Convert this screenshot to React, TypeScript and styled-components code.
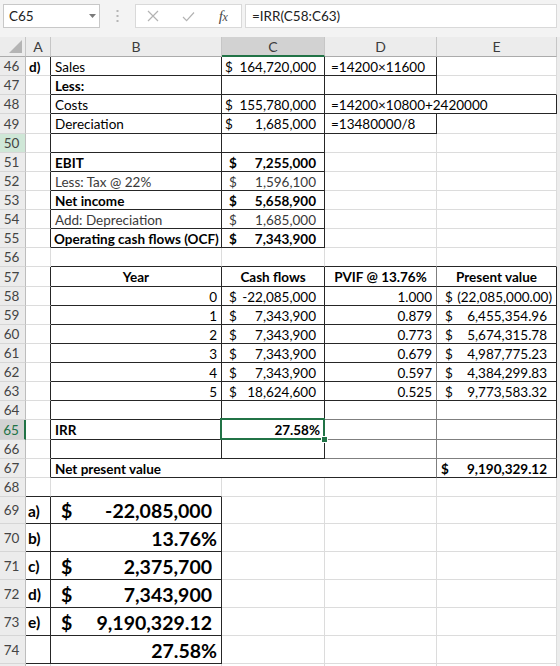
import React from 'react';
import styled, { createGlobalStyle, css } from 'styled-components';

const FONT = `Lato, "Open Sans", "Liberation Sans", sans-serif`;
const K = '#262626';
const M = '#7f7f7f';
const G = '#dcdcdc';
const GREEN = '#217346';
const COLS = '26px 25px 171px 103px 112px 120px 1fr';

const GlobalStyle = createGlobalStyle`
  html, body { margin: 0; padding: 0; background: #ffffff; }
  body { font-family: ${FONT}; }
  #root { width: 560px; height: 666px; }
`;

const Sheet = styled.div`
  width: 560px;
  height: 666px;
  overflow: hidden;
  background: #fff;
  display: flex;
  flex-direction: column;
  font-family: ${FONT};
`;

/* ---------- formula bar ---------- */
const FormulaBar = styled.div`
  flex: none;
  height: 37px;
  box-sizing: border-box;
  background: #f3f3f3;
  display: flex;
  align-items: flex-start;
  padding: 4px 3px 0 3px;
`;

const NameBox = styled.div`
  width: 97px;
  height: 24px;
  box-sizing: border-box;
  background: #fff;
  border: 1px solid #c8c8c8;
  display: flex;
  align-items: center;
  justify-content: space-between;
  padding: 0 3px 0 5px;
  font-size: 13.5px;
  color: #222;
`;

const Grip = styled.div`
  width: 35px;
  height: 24px;
  display: flex;
  align-items: center;
  justify-content: center;
`;

const ButtonBox = styled.div`
  width: 107px;
  height: 24px;
  box-sizing: border-box;
  background: #fff;
  border: 1px solid #d9d9d9;
  display: flex;
  align-items: center;
`;

const BarButton = styled.div<{ $w: number }>`
  width: ${(p) => p.$w}px;
  height: 22px;
  display: flex;
  align-items: center;
  justify-content: center;
`;

const Fx = styled.span`
  font-family: "Liberation Serif", "DejaVu Serif", serif;
  font-style: italic;
  font-size: 15px;
  color: #4a4a4a;
  letter-spacing: -0.5px;
  & small { font-size: 12px; }
`;

const FormulaInput = styled.div`
  margin-left: 3px;
  width: 312px;
  height: 24px;
  box-sizing: border-box;
  background: #fff;
  border: 1px solid #d9d9d9;
  display: flex;
  align-items: center;
  padding-left: 6px;
  font-size: 13.5px;
  color: #222;
`;

/* ---------- grid ---------- */
const Row = styled.div<{ $h: number }>`
  flex: none;
  display: grid;
  grid-template-columns: ${COLS};
  height: ${(p) => p.$h}px;
`;

const Corner = styled.div`
  box-sizing: border-box;
  background: #ececec;
  border-right: 1px solid #c6c6c6;
  border-bottom: 1px solid #ababab;
  display: flex;
  align-items: flex-end;
  justify-content: flex-end;
  padding: 0 3px 3px 0;
`;

const ColHead = styled.div<{ $active?: boolean }>`
  box-sizing: border-box;
  background: ${(p) => (p.$active ? '#d2d2d2' : '#ececec')};
  border-right: 1px solid #c6c6c6;
  border-bottom: ${(p) => (p.$active ? `2px solid ${GREEN}` : '1px solid #ababab')};
  display: flex;
  align-items: center;
  justify-content: center;
  font-size: 14px;
  color: #3c3c3c;
`;

const RowHead = styled.div<{ $active?: boolean; $tint?: boolean }>`
  box-sizing: border-box;
  background: ${(p) => (p.$active ? '#d2d2d2' : p.$tint ? '#cfe7d7' : '#ececec')};
  border-right: ${(p) => (p.$active ? `2px solid ${GREEN}` : '1px solid #bdbdbd')};
  border-bottom: 1px solid #d6d6d6;
  display: flex;
  align-items: center;
  justify-content: center;
  padding-right: 2px;
  font-size: 13.5px;
  color: ${(p) => (p.$active ? GREEN : '#444')};
`;

const Filler = styled.div`
  background: #ececec;
`;

type Align = 'l' | 'r' | 'c';

const CellBox = styled.div<{
  $r: string;
  $b: string;
  $span: number;
  $al: Align;
  $bold: boolean;
  $size: number;
  $dim: boolean;
  $pl: number;
  $pr: number;
  $sel: boolean;
}>`
  grid-column: span ${(p) => p.$span};
  box-sizing: border-box;
  border-right: 1px solid ${(p) => p.$r};
  border-bottom: 1px solid ${(p) => p.$b};
  display: flex;
  align-items: center;
  justify-content: ${(p) => (p.$al === 'r' ? 'flex-end' : p.$al === 'c' ? 'center' : 'flex-start')};
  padding: 1px ${(p) => p.$pr}px 0 ${(p) => p.$pl}px;
  font-size: ${(p) => p.$size}px;
  font-weight: ${(p) => (p.$bold ? 700 : 400)};
  color: ${(p) => (p.$dim ? '#3a3a3a' : '#000')};
  white-space: nowrap;
  min-width: 0;
  position: relative;
  ${(p) =>
    p.$sel &&
    css`
      z-index: 2;
      &::after {
        content: '';
        position: absolute;
        left: -2px;
        top: -2px;
        right: -1px;
        bottom: -1px;
        border: 2px solid ${GREEN};
        pointer-events: none;
      }
      &::before {
        content: '';
        position: absolute;
        right: -4px;
        bottom: -4px;
        width: 5px;
        height: 5px;
        background: ${GREEN};
        border: 1px solid #fff;
        z-index: 3;
      }
    `}
`;

const Acct = styled.span`
  flex: 1;
  display: flex;
  justify-content: space-between;
`;

/* ---------- data ---------- */
type Cell = {
  t?: string;
  a?: string;
  al?: Align;
  b?: boolean;
  big?: boolean;
  lab?: boolean;
  dim?: boolean;
  span?: number;
  pl?: number;
  pr?: number;
  sel?: boolean;
};

const E: Cell = {};

const ROWS: Record<number, Cell[]> = {
  46: [{ t: 'd)', b: true, pl: 3 }, { t: 'Sales' }, { a: '164,720,000', pl: 3 }, { t: '=14200×11600', pl: 6 }, E],
  47: [E, { t: 'Less:', b: true }, E, E, E],
  48: [E, { t: 'Costs' }, { a: '155,780,000', pl: 3 }, { t: '=14200×10800+2420000', pl: 6, span: 2 }],
  49: [E, { t: 'Dereciation' }, { a: '1,685,000', pl: 3 }, { t: '=13480000/8', pl: 6 }, E],
  51: [E, { t: 'EBIT', b: true }, { a: '7,255,000', b: true }, E, E],
  52: [E, { t: 'Less: Tax @ 22%', dim: true }, { a: '1,596,100', dim: true }, E, E],
  53: [E, { t: 'Net income', b: true }, { a: '5,658,900', b: true }, E, E],
  54: [E, { t: 'Add: Depreciation', dim: true }, { a: '1,685,000', dim: true }, E, E],
  55: [E, { t: 'Operating cash flows (OCF)', b: true, pl: 3 }, { a: '7,343,900', b: true }, E, E],
  57: [
    E,
    { t: 'Year', b: true, al: 'c' },
    { t: 'Cash flows', b: true, al: 'c' },
    { t: 'PVIF @ 13.76%', b: true, al: 'c' },
    { t: 'Present value', b: true, al: 'c' },
  ],
  58: [E, { t: '0', al: 'r' }, { a: '-22,085,000' }, { t: '1.000', al: 'r' }, { a: '(22,085,000.00)', pl: 8, pr: 4 }],
  59: [E, { t: '1', al: 'r' }, { a: '7,343,900' }, { t: '0.879', al: 'r' }, { a: '6,455,354.96', pl: 8 }],
  60: [E, { t: '2', al: 'r' }, { a: '7,343,900' }, { t: '0.773', al: 'r' }, { a: '5,674,315.78', pl: 8 }],
  61: [E, { t: '3', al: 'r' }, { a: '7,343,900' }, { t: '0.679', al: 'r' }, { a: '4,987,775.23', pl: 8 }],
  62: [E, { t: '4', al: 'r' }, { a: '7,343,900' }, { t: '0.597', al: 'r' }, { a: '4,384,299.83', pl: 8 }],
  63: [E, { t: '5', al: 'r' }, { a: '18,624,600' }, { t: '0.525', al: 'r' }, { a: '9,773,583.32', pl: 8 }],
  65: [E, { t: 'IRR', b: true }, { t: '27.58%', b: true, al: 'r', sel: true }, E, E],
  67: [E, { t: 'Net present value', b: true, span: 3 }, { a: '9,190,329.12', b: true, pl: 4 }],
  69: [{ t: 'a)', lab: true }, { a: '-22,085,000', big: true }, E, E, E],
  70: [{ t: 'b)', lab: true }, { t: '13.76%', big: true, al: 'r' }, E, E, E],
  71: [{ t: 'c)', lab: true }, { a: '2,375,700', big: true }, E, E, E],
  72: [{ t: 'd)', lab: true }, { a: '7,343,900', big: true }, E, E, E],
  73: [{ t: 'e)', lab: true }, { a: '9,190,329.12', big: true }, E, E, E],
  74: [E, { t: '27.58%', big: true, al: 'r' }, E, E, E],
};

const HEIGHTS: Record<number, number> = { 49: 20, 57: 20, 65: 20, 69: 27 };
const rowHeight = (r: number) => HEIGHTS[r] ?? (r >= 70 && r <= 74 ? 28 : r === 75 ? 10 : 19);

const inR = (r: number, a: number, b: number) => r >= a && r <= b;

function rightEdge(r: number, c: number): string {
  switch (c) {
    case 0:
      return inR(r, 46, 55) || inR(r, 57, 67) || inR(r, 69, 74) ? K : G;
    case 1:
      return inR(r, 46, 55) || inR(r, 57, 66) || inR(r, 69, 74) ? K : G;
    case 2:
      return inR(r, 46, 55) || inR(r, 57, 66) ? K : G;
    case 3:
      return [46, 47, 49].includes(r) ? K : inR(r, 57, 67) ? M : G;
    case 4:
      return r === 48 || inR(r, 57, 67) ? K : G;
    default:
      return G;
  }
}

function bottomEdge(r: number, c: number): string {
  switch (c) {
    case 0:
      return inR(r, 68, 74) ? K : G;
    case 1:
      return inR(r, 46, 74) ? K : G;
    case 2:
      return inR(r, 46, 67) ? K : G;
    case 3:
      return inR(r, 46, 49) || inR(r, 56, 63) || r === 67 ? K : inR(r, 64, 66) ? M : G;
    case 4:
      return inR(r, 47, 48) || inR(r, 56, 63) || r === 67 ? K : inR(r, 64, 66) ? M : G;
    default:
      return G;
  }
}

const X = () => (
  <svg width="12" height="12" viewBox="0 0 12 12">
    <path d="M1 1 L11 11 M11 1 L1 11" stroke="#b3b3b3" strokeWidth="1.2" fill="none" />
  </svg>
);

const Check = () => (
  <svg width="13" height="11" viewBox="0 0 13 11">
    <path d="M1 6 L4.6 9.6 L12 1.5" stroke="#b3b3b3" strokeWidth="1.2" fill="none" />
  </svg>
);

const Dots = () => (
  <svg width="3" height="14" viewBox="0 0 3 14">
    <rect x="0.5" y="1" width="2" height="2" fill="#b5b5b5" />
    <rect x="0.5" y="6" width="2" height="2" fill="#b5b5b5" />
    <rect x="0.5" y="11" width="2" height="2" fill="#b5b5b5" />
  </svg>
);

const Caret = () => (
  <svg width="7" height="4" viewBox="0 0 7 4">
    <path d="M0 0 H7 L3.5 4 Z" fill="#7a7a7a" />
  </svg>
);

const Tri = () => (
  <svg width="13" height="13" viewBox="0 0 13 13">
    <path d="M13 0 V13 H0 Z" fill="#b4b4b4" />
  </svg>
);

function renderCells(r: number) {
  const cells = ROWS[r] ?? [E, E, E, E, E];
  let c = 0;
  return cells.map((cell, i) => {
    const span = cell.span ?? 1;
    const last = c + span - 1;
    const rr = rightEdge(r, last);
    const bb = bottomEdge(r, c);
    const col = c;
    c += span;
    const size = cell.big ? 19.5 : cell.lab ? 15.5 : 13.5;
    const bold = !!(cell.b || cell.big || cell.lab);
    const isAcct = cell.a !== undefined;
    const defPl = cell.big ? 10 : cell.lab ? 2 : col === 2 && isAcct ? 7 : 4;
    const defPr = isAcct ? (cell.big ? 9 : col === 4 ? 9 : 8) : 4;
    return (
      <CellBox
        key={i}
        $r={rr}
        $b={bb}
        $span={span}
        $al={cell.al ?? 'l'}
        $bold={bold}
        $size={size}
        $dim={!!cell.dim}
        $pl={cell.pl ?? defPl}
        $pr={cell.pr ?? defPr}
        $sel={!!cell.sel}
      >
        {isAcct ? (
          <Acct>
            <span>$</span>
            <span>{cell.a}</span>
          </Acct>
        ) : (
          cell.t
        )}
      </CellBox>
    );
  });
}

const rowNums = Array.from({ length: 30 }, (_, i) => 46 + i);

export default function App() {
  return (
    <>
      <GlobalStyle />
      <Sheet>
        <FormulaBar>
          <NameBox>
            <span>C65</span>
            <Caret />
          </NameBox>
          <Grip>
            <Dots />
          </Grip>
          <ButtonBox>
            <BarButton $w={34}>
              <X />
            </BarButton>
            <BarButton $w={36}>
              <Check />
            </BarButton>
            <BarButton $w={34}>
              <Fx>
                f<small>x</small>
              </Fx>
            </BarButton>
          </ButtonBox>
          <FormulaInput>=IRR(C58:C63)</FormulaInput>
        </FormulaBar>

        <Row $h={20}>
          <Corner>
            <Tri />
          </Corner>
          <ColHead>A</ColHead>
          <ColHead>B</ColHead>
          <ColHead $active>C</ColHead>
          <ColHead>D</ColHead>
          <ColHead>E</ColHead>
          <Filler />
        </Row>

        {rowNums.map((r) => (
          <Row key={r} $h={rowHeight(r)}>
            <RowHead $active={r === 65} $tint={r === 50}>
              {r < 75 ? r : null}
            </RowHead>
            {renderCells(r)}
            <Filler />
          </Row>
        ))}
      </Sheet>
    </>
  );
}
